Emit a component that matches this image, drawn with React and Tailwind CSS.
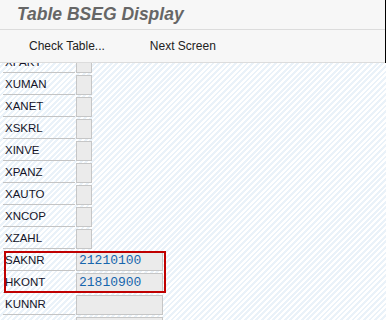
const ROWS = [
  { name: "XFAKT", type: "check" },
  { name: "XUMAN", type: "check" },
  { name: "XANET", type: "check" },
  { name: "XSKRL", type: "check" },
  { name: "XINVE", type: "check" },
  { name: "XPANZ", type: "check" },
  { name: "XAUTO", type: "check" },
  { name: "XNCOP", type: "check" },
  { name: "XZAHL", type: "check" },
  { name: "SAKNR", type: "field", value: "21210100" },
  { name: "HKONT", type: "field", value: "21810900" },
  { name: "KUNNR", type: "field", value: "" },
  { name: "LIFNR", type: "field", value: "" },
];

export default function App() {
  return (
    <div className="w-[386px] h-[320px] overflow-hidden flex flex-col bg-white font-['Liberation_Sans',Arial,sans-serif]">
      <div className="h-[63px] shrink-0 bg-[#f7f7f7] border-r border-black flex flex-col">
        <div className="h-[30px] border-b border-[#dcdcdc] flex items-center pl-[17px]">
          <h1 className="text-[17.5px] font-bold italic text-[#666666] leading-none">
            Table BSEG Display
          </h1>
        </div>
        <div className="h-[33px] border-b border-[#dcdcdc] flex items-center text-[12px] text-[#222222]">
          <span className="ml-[29px]">Check Table...</span>
          <span className="ml-[45px]">Next Screen</span>
        </div>
      </div>

      <div className="relative flex-1 overflow-hidden bg-[repeating-linear-gradient(135deg,#ffffff_0px,#ffffff_2px,#eaf2f9_2px,#eaf2f9_4px)]">
        <div className="-mt-[10px] pl-[3px] flex flex-col gap-[2px]">
          {ROWS.map((row) => (
            <div key={row.name} className="flex h-[20px] gap-[1px]">
              <div className="w-[72px] border-b border-[#c4c4c4] flex items-center pl-[2px] text-[11.5px] text-[#141428]">
                {row.name}
              </div>
              {row.type === "check" ? (
                <div className="w-[16px] bg-[#ebebeb] border border-[#c6c6c6]" />
              ) : (
                <div className="w-[87px] bg-[#ebebeb] border border-[#c6c6c6] flex items-center pl-[2px] text-[13px] text-[#1766ad] font-['Liberation_Mono','Courier_New',monospace]">
                  {row.value}
                </div>
              )}
            </div>
          ))}
        </div>
        <div className="absolute left-[4px] top-[188px] w-[162px] h-[42px] border-2 border-[#c00000]" />
      </div>
    </div>
  );
}
